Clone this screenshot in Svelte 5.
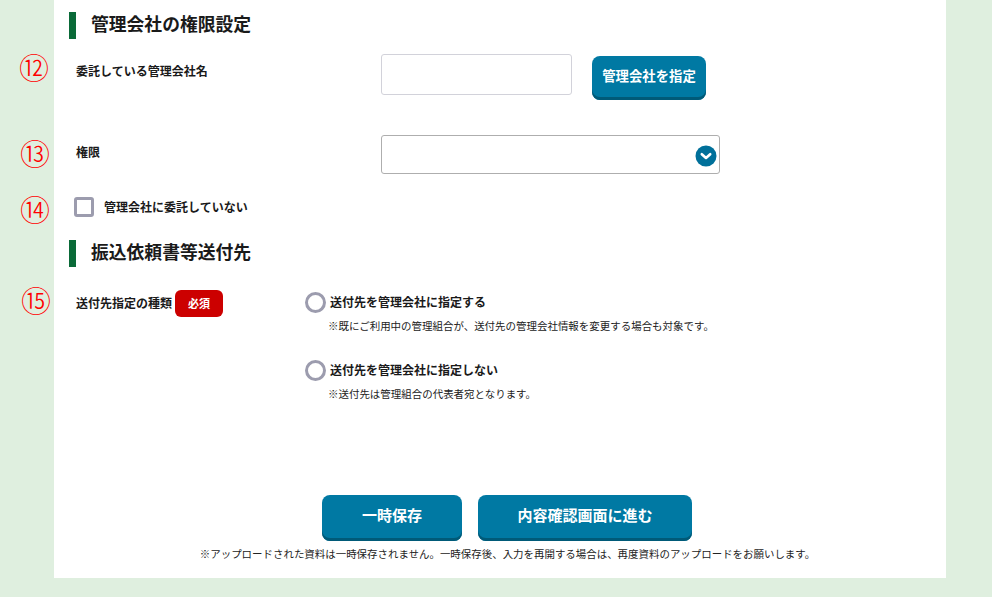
<script lang="ts">
	const radios = [
		{
			label: '送付先を管理会社に指定する',
			note: '※既にご利用中の管理組合が、送付先の管理会社情報を変更する場合も対象です。'
		},
		{
			label: '送付先を管理会社に指定しない',
			note: '※送付先は管理組合の代表者宛となります。'
		}
	];
</script>

<div class="page">
	<main class="card">
		<h2 class="heading">管理会社の権限設定</h2>

		<div class="row company">
			<span class="num">⑫</span>
			<span class="label">委託している管理会社名</span>
			<input class="text-input" type="text" />
			<button class="btn pick" type="button">管理会社を指定</button>
		</div>

		<div class="row authority">
			<span class="num">⑬</span>
			<span class="label">権限</span>
			<div class="select-wrap">
				<select class="select"></select>
				<svg class="chevron" width="22" height="22" viewBox="0 0 22 22" aria-hidden="true">
					<circle cx="11" cy="11" r="10.5" fill="#00709a" />
					<path d="M6.8 9.2 11 13l4.2-3.8" fill="none" stroke="#fff" stroke-width="2.6" stroke-linecap="round" stroke-linejoin="round" />
				</svg>
			</div>
		</div>

		<label class="row no-company">
			<span class="num">⑭</span>
			<input class="check" type="checkbox" />
			<span class="label">管理会社に委託していない</span>
		</label>

		<h2 class="heading second">振込依頼書等送付先</h2>

		<div class="row destination">
			<span class="num">⑮</span>
			<div class="dest-label">
				<span class="label">送付先指定の種類</span>
				<span class="required">必須</span>
			</div>
			<div class="radios">
				{#each radios as r}
					<div class="radio-item">
						<label class="radio-line">
							<input class="radio" type="radio" name="dest" />
							<span class="label">{r.label}</span>
						</label>
						<p class="note">{r.note}</p>
					</div>
				{/each}
			</div>
		</div>

		<div class="actions">
			<button class="btn big save" type="button">一時保存</button>
			<button class="btn big next" type="button">内容確認画面に進む</button>
		</div>
		<p class="foot">※アップロードされた資料は一時保存されません。一時保存後、入力を再開する場合は、再度資料のアップロードをお願いします。</p>
	</main>
</div>

<style>
	:global(body) {
		margin: 0;
		background: #dfefdf;
	}
	.page {
		width: 992px;
		height: 597px;
		overflow: hidden;
		font-family: "Noto Sans CJK JP", "Noto Sans", sans-serif;
		color: #1a1a1a;
	}
	.card {
		box-sizing: border-box;
		width: 892px;
		height: 578px;
		margin-left: 54px;
		padding-top: 12px;
		background: #fff;
	}
	.heading {
		height: 27px;
		margin: 0 0 0 15px;
		padding-left: 15px;
		border-left: 7px solid #0a6a38;
		font-size: 17.8px;
		font-weight: 700;
		line-height: 23px;
	}
	.second {
		margin-top: 23px;
	}
	.row {
		position: relative;
		display: flex;
		align-items: flex-start;
		padding-left: 22px;
	}
	.num {
		position: absolute;
		left: -36px;
		top: -6px;
		width: 32px;
		font-size: 30px;
		font-weight: 300;
		line-height: 36px;
		text-align: center;
		color: #f00;
	}
	.label {
		font-size: 12px;
		font-weight: 700;
		line-height: 18px;
		white-space: nowrap;
	}
	.company {
		height: 46px;
		margin-top: 15px;
	}
	.company > .label {
		width: 305px;
		margin-top: 8px;
	}
	.text-input {
		box-sizing: border-box;
		width: 191px;
		height: 41px;
		margin: 0;
		border: 1px solid #d2d2da;
		border-radius: 3px;
		background: #fff;
	}
	.btn {
		border: none;
		background: #0079a3;
		color: #fff;
		font-family: inherit;
		font-weight: 700;
		box-shadow: inset 0 -3px 0 #005a78;
		padding: 0 0 3px;
		white-space: nowrap;
	}
	.pick {
		width: 114px;
		height: 44px;
		margin: 2px 0 0 20px;
		padding-bottom: 7px;
		border-radius: 8px;
		font-size: 13.4px;
	}
	.authority {
		height: 39px;
		margin-top: 35px;
	}
	.authority > .label {
		width: 305px;
		margin-top: 8px;
	}
	.authority .num {
		left: -35px;
		top: -1px;
	}
	.select-wrap {
		position: relative;
		width: 339px;
		height: 39px;
	}
	.select {
		appearance: none;
		box-sizing: border-box;
		width: 100%;
		height: 100%;
		margin: 0;
		border: 1px solid #aeaeae;
		border-radius: 3px;
		background: #fff;
	}
	.chevron {
		position: absolute;
		right: 3px;
		top: 10px;
	}
	.no-company {
		align-items: center;
		height: 20px;
		margin-top: 23px;
		padding-left: 20px;
	}
	.no-company .num {
		left: -35px;
		top: -7px;
	}
	.check {
		appearance: none;
		box-sizing: border-box;
		width: 20px;
		height: 20px;
		margin: 0 10px 0 0;
		border: 3px solid #9c9cae;
		border-radius: 3px;
		background: #fff;
	}
	.destination {
		margin-top: 23px;
	}
	.destination .num {
		top: -9px;
		left: -34px;
	}
	.dest-label {
		display: flex;
		align-items: flex-start;
		gap: 3px;
		width: 229px;
	}
	.dest-label .label {
		margin-top: 4px;
	}
	.required {
		width: 48px;
		height: 27px;
		border-radius: 6px;
		background: #cc0000;
		color: #fff;
		font-size: 11px;
		font-weight: 700;
		line-height: 26px;
		text-align: center;
	}
	.radios {
		display: flex;
		flex-direction: column;
		gap: 27px;
		margin-top: 2px;
	}
	.radio-line {
		display: flex;
		align-items: center;
		gap: 4px;
		height: 21px;
	}
	.radio-line .label {
		padding-bottom: 2px;
	}
	.radio {
		appearance: none;
		box-sizing: border-box;
		width: 21px;
		height: 21px;
		margin: 0;
		border: 3px solid #9c9cae;
		border-radius: 50%;
		background: #fff;
	}
	.note {
		margin: 5px 0 0 23px;
		font-size: 10.47px;
		line-height: 15px;
		color: #222;
		white-space: nowrap;
	}
	.actions {
		display: flex;
		justify-content: center;
		gap: 16px;
		margin-top: 94px;
		padding-left: 14px;
	}
	.big {
		height: 46px;
		border-radius: 8px;
		font-size: 15px;
		padding-bottom: 7px;
	}
	.save {
		width: 140px;
	}
	.next {
		width: 214px;
	}
	.foot {
		margin: 5px 0 0;
		padding-left: 15px;
		font-size: 10.46px;
		line-height: 15px;
		text-align: center;
		color: #222;
		white-space: nowrap;
	}
</style>
